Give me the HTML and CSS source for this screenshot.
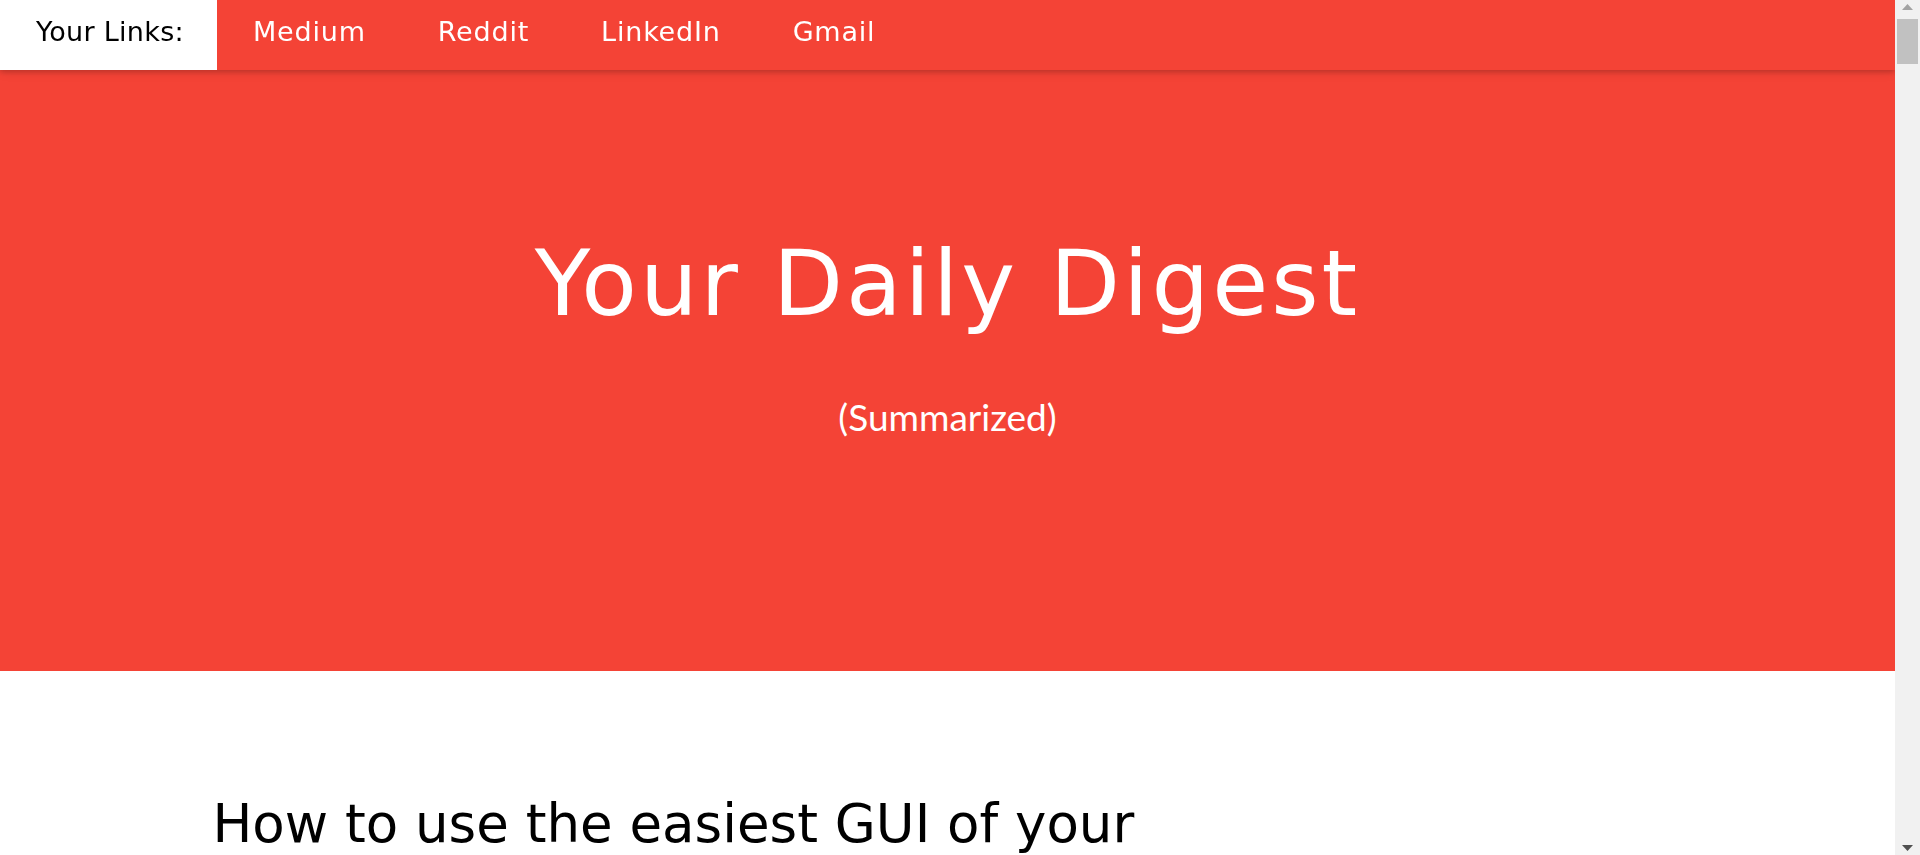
FILE: index.html
```html
<!DOCTYPE html>
<html lang="en">
<head>
<meta charset="utf-8">
<title>Your Daily Digest</title>
<link rel="stylesheet" href="styles.css">
</head>
<body>
<nav class="topbar">
  <span class="topbar-item topbar-label">Your Links:</span>
  <a class="topbar-item" href="#">Medium</a>
  <a class="topbar-item" href="#">Reddit</a>
  <a class="topbar-item" href="#">LinkedIn</a>
  <a class="topbar-item" href="#">Gmail</a>
</nav>

<header class="hero">
  <h1 class="hero-title">Your Daily Digest</h1>
  <p class="hero-sub">(Summarized)</p>
</header>

<main class="digest">
  <div class="digest-inner">
    <article class="story">
      <h1 class="story-title">How to use the easiest GUI of your dreams</h1>
      <h5 class="story-source">Medium</h5>
      <p class="story-text">A short walkthrough of a graphical interface that takes minutes to learn and saves hours every week.</p>
    </article>
    <article class="story">
      <h1 class="story-title">Top discussions on Reddit today</h1>
      <h5 class="story-source">Reddit</h5>
      <p class="story-text">The most upvoted threads of the day, condensed into a few lines each.</p>
    </article>
    <article class="story">
      <h1 class="story-title">What your network is talking about</h1>
      <h5 class="story-source">LinkedIn</h5>
      <p class="story-text">Highlights from posts and updates shared by your connections.</p>
    </article>
    <article class="story">
      <h1 class="story-title">Your inbox at a glance</h1>
      <h5 class="story-source">Gmail</h5>
      <p class="story-text">Unread messages grouped and summarized so you can decide what needs attention.</p>
    </article>
  </div>
</main>

<div class="scrollbar" aria-hidden="true">
  <div class="sb-button sb-up">
    <svg width="11" height="6" viewBox="0 0 11 6"><polygon points="0,6 11,6 5.5,0" fill="#a3a3a3"/></svg>
  </div>
  <div class="sb-thumb"></div>
  <div class="sb-track"></div>
  <div class="sb-button sb-down">
    <svg width="11" height="6" viewBox="0 0 11 6"><polygon points="0,0 11,0 5.5,6" fill="#505050"/></svg>
  </div>
</div>
</body>
</html>
```

FILE: styles.css
```css
body {
  margin: 0 25px 0 0;
  font-family: "Lato", "Liberation Sans", sans-serif;
  font-size: 22px;
  line-height: 1.5;
  color: #000;
  background: #fff;
}

/* top bar */
.topbar {
  position: fixed;
  top: 0;
  left: 0;
  right: 25px;
  z-index: 10;
  display: flex;
  height: 70px;
  background: #f44336;
  box-shadow: 0 2px 5px 0 rgba(0, 0, 0, 0.16), 0 2px 10px 0 rgba(0, 0, 0, 0.12);
  font-family: "DejaVu Sans", "Liberation Sans", sans-serif;
  font-size: 27px;
  letter-spacing: 0.8px;
}

.topbar-item {
  display: block;
  padding: 0 36px 6px;
  line-height: 64px;
  color: #fff;
  text-decoration: none;
}

.topbar-label {
  background: #fff;
  color: #000;
  padding: 0 33px 6px 36px;
  letter-spacing: 0.3px;
}

/* hero */
.hero {
  background: #f44336;
  color: #fff;
  text-align: center;
  height: 671px;
  box-sizing: border-box;
  padding-top: 238px;
}

.hero-title {
  margin: 0;
  font-family: "DejaVu Sans", "Liberation Sans", sans-serif;
  font-weight: 400;
  font-size: 91px;
  line-height: 91px;
  letter-spacing: 3px;
}

.hero-sub {
  margin: 70px 0 0;
  font-family: "Lato", "Liberation Sans", sans-serif;
  font-size: 37px;
  line-height: 36px;
}

/* digest */
.digest {
  padding-top: 113px;
  padding-bottom: 96px;
}

.digest-inner {
  max-width: 1470px;
  margin: 0 auto;
}

.story {
  width: 980px;
  margin-bottom: 120px;
}

.story-title {
  margin: 0;
  font-family: "DejaVu Sans", "Liberation Sans", sans-serif;
  font-weight: 400;
  font-size: 53px;
  line-height: 80px;
  color: #000;
}

.story-source {
  margin: 24px 0 0;
  font-size: 27px;
  font-weight: 400;
  color: #000;
}

.story-text {
  margin: 24px 0 0;
  color: #757575;
}

/* scrollbar drawn over the page edge */
.scrollbar {
  position: fixed;
  top: 0;
  right: 0;
  z-index: 20;
  width: 25px;
  height: 100vh;
  background: #f1f1f1;
  display: flex;
  flex-direction: column;
}

.sb-button {
  height: 17px;
  display: flex;
  justify-content: center;
}

.sb-up {
  align-items: flex-start;
  padding-top: 4px;
  box-sizing: border-box;
}

.sb-down {
  align-items: flex-end;
  padding-bottom: 4px;
  box-sizing: border-box;
}

.sb-button svg {
  display: block;
}

.sb-thumb {
  height: 45px;
  margin: 2px 2px 0;
  background: #c1c1c1;
}

.sb-track {
  flex: 1;
}
```
